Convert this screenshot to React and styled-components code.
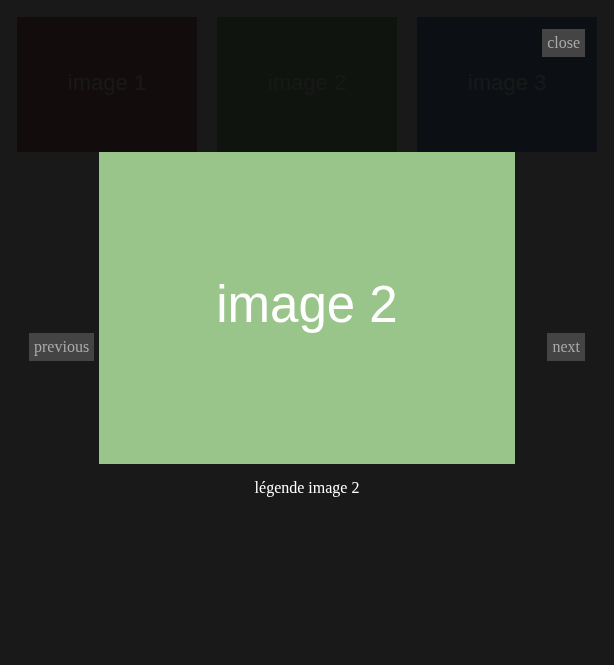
import React from "react";
import styled, { createGlobalStyle } from "styled-components";

const Global = createGlobalStyle`
  html, body { margin: 0; padding: 0; background: #ffffff; }
  body { font-family: "Liberation Serif", "Times New Roman", serif; font-size: 16px; }
`;

const Gallery = styled.div`
  display: flex;
  gap: 20px;
  padding: 17px;
`;

const Thumb = styled.div`
  width: 180px;
  height: 135px;
  flex: none;
  box-sizing: border-box;
  padding-bottom: 3px;
  background: ${(p) => p.$color};
  display: flex;
  align-items: center;
  justify-content: center;
  color: #f0f0f0;
  font-family: "Liberation Sans", Arial, sans-serif;
  font-size: 22px;
`;

const Overlay = styled.div`
  position: fixed;
  inset: 0;
  background: rgba(0, 0, 0, 0.9);
  display: flex;
  flex-direction: column;
  align-items: center;
  padding-top: 152px;
  box-sizing: border-box;
`;

const Figure = styled.figure`
  margin: 0;
  display: flex;
  flex-direction: column;
  align-items: center;
`;

const BigImage = styled.div`
  width: 416px;
  height: 312px;
  box-sizing: border-box;
  padding-bottom: 7px;
  background: ${(p) => p.$color};
  display: flex;
  align-items: center;
  justify-content: center;
  color: #ffffff;
  font-family: "Liberation Sans", Arial, sans-serif;
  font-size: 51px;
`;

const Caption = styled.figcaption`
  margin-top: 15px;
  color: #ffffff;
  font-family: "Liberation Serif", "Times New Roman", serif;
  font-size: 16px;
`;

const Button = styled.button`
  position: absolute;
  border: none;
  margin: 0;
  padding: 5px;
  line-height: 18px;
  background: #444444;
  color: #aaaaaa;
  font-family: "Liberation Serif", "Times New Roman", serif;
  font-size: 16px;
  cursor: pointer;
  ${(p) => p.$pos}
`;

const images = [
  { label: "image 1", color: "#b47878" },
  { label: "image 2", color: "#99c58a" },
  { label: "image 3", color: "#78a0c8" },
];

export default function App() {
  const current = images[1];
  return (
    <>
      <Global />
      <Gallery>
        {images.map((img) => (
          <Thumb key={img.label} $color={img.color}>
            {img.label}
          </Thumb>
        ))}
      </Gallery>
      <Overlay>
        <Button $pos="top: 29px; right: 29px;">close</Button>
        <Button $pos="top: 50%; left: 29px;">previous</Button>
        <Button $pos="top: 50%; right: 29px;">next</Button>
        <Figure>
          <BigImage $color={current.color}>{current.label}</BigImage>
          <Caption>légende image 2</Caption>
        </Figure>
      </Overlay>
    </>
  );
}
